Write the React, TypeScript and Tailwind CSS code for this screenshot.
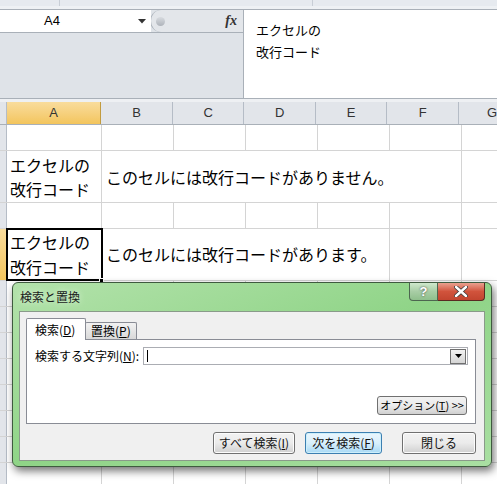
import React from "react";

const JP = "font-['Noto_Sans_CJK_JP',sans-serif]";

function Btn({ w, children, primary }: { w: string; children: React.ReactNode; primary?: boolean }) {
  return (
    <div
      className={`${w} h-[22px] flex items-center justify-center rounded-[3px] border text-[12px] leading-none text-[#111] ${
        primary
          ? "border-[#3c7fb1] bg-gradient-to-b from-[#eaf6fd] via-[#d9f0fc] to-[#a7d9f5] shadow-[inset_0_0_0_1px_#cdeffb]"
          : "border-[#707070] bg-gradient-to-b from-[#f2f2f2] via-[#ebebeb] to-[#d0d0d0] shadow-[inset_0_0_0_1px_#fcfcfc]"
      }`}
    >
      {children}
    </div>
  );
}

export default function App() {
  const cols = ["B", "C", "D", "E", "F"];
  return (
    <div className={`relative w-[497px] h-[484px] overflow-hidden bg-white ${JP}`}>
      {/* ribbon remnant */}
      <div className="h-[6px] flex bg-[#e6eaef]">
        <div className="w-[60px] border-r border-[#c8ced6]" />
        <div className="w-[253px] border-r border-[#c8ced6]" />
        <div className="flex-1" />
      </div>
      <div className="h-[4px] bg-[#eef1f4] border-b border-[#a9b0b8]" />

      {/* formula bar */}
      <div className="flex h-[89px] border-b border-[#a9b0b8]">
        <div className="w-[244px] border-r border-[#a9b0b8] bg-[#dfe3e8] flex flex-col">
          <div className="h-[23px] flex border-b border-[#a9b0b8]">
            <div className="w-[151px] bg-white flex items-center relative">
              <span className="pl-[44px] text-[13px] font-['Liberation_Sans',sans-serif] text-black">A4</span>
              <svg className="absolute left-[138px] top-[9px]" width="8" height="5" viewBox="0 0 8 5">
                <path d="M0 0 H8 L4 4.5 Z" fill="#333" />
              </svg>
            </div>
            <div className="flex-1 flex items-center rounded-l-[14px] border-l border-[#a9b0b8] bg-[#e3e6ea] -ml-[1px] pl-[5px] pr-[6px]">
              <div className="w-[9px] h-[9px] rounded-full bg-gradient-to-b from-[#d8dbe0] to-[#aeb3ba]" />
              <div className="flex-1" />
              <span className="text-[14px] italic font-bold font-['Liberation_Serif',serif] text-[#333] leading-none">fx</span>
            </div>
          </div>
          <div className="flex-1" />
        </div>
        <div className="flex-1 bg-white pl-[12px] pt-[9px] text-[13px] leading-[22px] text-black">
          <div>エクセルの</div>
          <div>改行コード</div>
        </div>
      </div>
      <div className="h-[3px] bg-[#eef0f3]" />

      {/* column header */}
      <div className="flex h-[23px] bg-[#e2e5ea] border-b border-[#a9b0b8] text-[13px] font-['Liberation_Sans',sans-serif] text-[#333]">
        <div className="w-[7px] border-r border-[#b5bcc6]" />
        <div className="w-[95px] flex items-center justify-center border-r border-[#c29b3f] bg-gradient-to-b from-[#f9dc9c] to-[#f3c55c]">A</div>
        {cols.map((c) => (
          <div key={c} className="w-[72px] flex items-center justify-center border-r border-[#b5bcc6]">
            {c}
          </div>
        ))}
        <div className="flex-1 flex items-center pl-[28px]">G</div>
      </div>

      {/* rows */}
      <div className="flex flex-col text-[16px] text-black">
        {/* row 1 */}
        <div className="flex h-[26px] border-b border-[#d4d4d4]">
          <div className="w-[7px] bg-[#e2e5ea] border-r border-[#b5bcc6]" />
          <div className="w-[95px] border-r border-[#d4d4d4]" />
          {cols.map((c) => (
            <div key={c} className="w-[72px] border-r border-[#d4d4d4]" />
          ))}
          <div className="flex-1" />
        </div>
        {/* row 2 */}
        <div className="flex h-[52px] border-b border-[#d4d4d4]">
          <div className="w-[7px] bg-[#e2e5ea] border-r border-[#b5bcc6]" />
          <div className="w-[95px] border-r border-[#d4d4d4] flex flex-col justify-center pl-[3px] leading-[24px] whitespace-nowrap">
            <div>エクセルの</div>
            <div>改行コード</div>
          </div>
          <div className="w-[360px] border-r border-[#d4d4d4] flex items-center pl-[4px] whitespace-nowrap">
            このセルには改行コードがありません。
          </div>
          <div className="flex-1" />
        </div>
        {/* row 3 */}
        <div className="flex h-[26px] border-b border-[#d4d4d4]">
          <div className="w-[7px] bg-[#e2e5ea] border-r border-[#b5bcc6]" />
          <div className="w-[95px] border-r border-[#d4d4d4]" />
          {cols.map((c) => (
            <div key={c} className="w-[72px] border-r border-[#d4d4d4]" />
          ))}
          <div className="flex-1" />
        </div>
        {/* row 4 */}
        <div className="flex h-[52px] border-b border-[#d4d4d4]">
          <div className="w-[7px] bg-gradient-to-b from-[#f9dc9c] to-[#f3c55c] border-r border-[#c29b3f]" />
          <div className="relative w-[95px] border-r border-[#d4d4d4] flex flex-col justify-center pl-[3px] leading-[25px] whitespace-nowrap">
            <div>エクセルの</div>
            <div>改行コード</div>
            <div className="absolute -left-[1px] -top-[1px] w-[97px] h-[53px] border-2 border-black" />
            <div className="absolute -right-[3px] -bottom-[3px] w-[5px] h-[5px] bg-black border border-white" />
          </div>
          <div className="w-[288px] border-r border-[#d4d4d4] flex items-center pl-[4px] pb-[2px] whitespace-nowrap">
            このセルには改行コードがあります。
          </div>
          <div className="w-[72px] border-r border-[#d4d4d4]" />
          <div className="flex-1" />
        </div>
        {Array.from({ length: 8 }).map((_, i) => (
          <div key={i} className="flex h-[26px] border-b border-[#d4d4d4]">
            <div className="w-[7px] bg-[#e2e5ea] border-r border-[#b5bcc6]" />
            <div className="w-[95px] border-r border-[#d4d4d4]" />
            {cols.map((c) => (
              <div key={c} className="w-[72px] border-r border-[#d4d4d4]" />
            ))}
            <div className="flex-1" />
          </div>
        ))}
      </div>

      {/* dialog */}
      <div className="absolute left-[12px] top-[282px] w-[480px] h-[185px] rounded-[6px] border border-[#3f5a3f] bg-gradient-to-br from-[#b3e2ab] via-[#8fd487] to-[#a9dfa2] shadow-[2px_4px_8px_rgba(0,0,0,0.55)] flex flex-col px-[6px] pb-[5px]">
        {/* title bar */}
        <div className="relative h-[28px] flex items-center pl-[1px]">
          <span className="text-[12px] text-[#1a1a1a] [text-shadow:0_0_6px_#e6f5e3]">検索と置換</span>
          <div className="absolute right-[0px] top-0 flex">
            <div className="w-[29px] h-[18px] rounded-bl-[4px] border border-[#4d6650] border-t-0 bg-gradient-to-b from-[#cfe8cc] via-[#a8cda5] to-[#8fbf8c] flex items-center justify-center text-white font-bold text-[13px] font-['Liberation_Sans',sans-serif] [text-shadow:0_0_2px_#333]">
              ?
            </div>
            <div className="w-[47px] h-[18px] rounded-br-[4px] border border-[#5a2a22] border-t-0 border-l-0 bg-gradient-to-b from-[#e9a08f] via-[#d1533c] to-[#c2452f] flex items-center justify-center">
              <svg width="14" height="11" viewBox="0 0 14 11">
                <path d="M2 1 L12 10 M12 1 L2 10" stroke="#3a3a3a" strokeWidth="4" strokeLinecap="round" />
                <path d="M2 1 L12 10 M12 1 L2 10" stroke="#ffffff" strokeWidth="2.4" strokeLinecap="round" />
              </svg>
            </div>
          </div>
        </div>
        {/* inner */}
        <div className="flex-1 bg-[#f0f0f0] border border-[#8a9a8a] pt-[6px] pl-[6px] pr-[9px] flex flex-col">
          <div className="flex items-end h-[21px] text-[12px] text-black">
            <div className="relative z-10 w-[60px] h-[22px] -mb-[1px] bg-white border border-[#898c95] border-b-0 rounded-t-[2px] flex items-center pl-[8px]">
              検索(<span className="underline">D</span>)
            </div>
            <div className="w-[52px] h-[17px] -ml-[1px] border border-[#898c95] border-b-0 rounded-t-[2px] bg-gradient-to-b from-[#f2f2f2] to-[#d9d9d9] flex items-center pl-[5px]">
              置換(<span className="underline">P</span>)
            </div>
          </div>
          <div className="h-[85px] w-[450px] bg-white border border-[#898c95] flex flex-col pt-[7px] pl-[8px] pr-[7px] text-[12px] text-black">
            <div className="flex items-center h-[18px]">
              <div className="w-[108px] whitespace-nowrap">
                検索する文字列(<span className="underline">N</span>):
              </div>
              <div className="flex-1 h-[18px] border border-[#abadb3] bg-white flex items-center justify-between pl-[3px] pr-[1px]">
                <div className="w-[1px] h-[12px] bg-black" />
                <div className="w-[16px] h-[15px] border border-[#707070] bg-gradient-to-b from-[#f2f2f2] to-[#d5d5d5] flex items-center justify-center">
                  <svg width="7" height="4" viewBox="0 0 7 4">
                    <path d="M0 0 H7 L3.5 4 Z" fill="#000" />
                  </svg>
                </div>
              </div>
            </div>
            <div className="flex-1" />
            <div className="flex justify-end pb-[8px] pr-[1px]">
              <div className="w-[90px] h-[19px] rounded-[3px] border border-[#707070] bg-gradient-to-b from-[#f2f2f2] via-[#ebebeb] to-[#d0d0d0] flex items-center justify-center text-[11px] whitespace-nowrap">
                オプション(<span className="underline">T</span>) &gt;&gt;
              </div>
            </div>
          </div>
          <div className="flex justify-end mt-[8px] w-[450px]">
            <Btn w="w-[82px]">
              すべて検索(<span className="underline">I</span>)
            </Btn>
            <div className="w-[10px]" />
            <Btn w="w-[77px]" primary>
              次を検索(<span className="underline">F</span>)
            </Btn>
            <div className="w-[20px]" />
            <Btn w="w-[74px]">閉じる</Btn>
          </div>
        </div>
      </div>
    </div>
  );
}
